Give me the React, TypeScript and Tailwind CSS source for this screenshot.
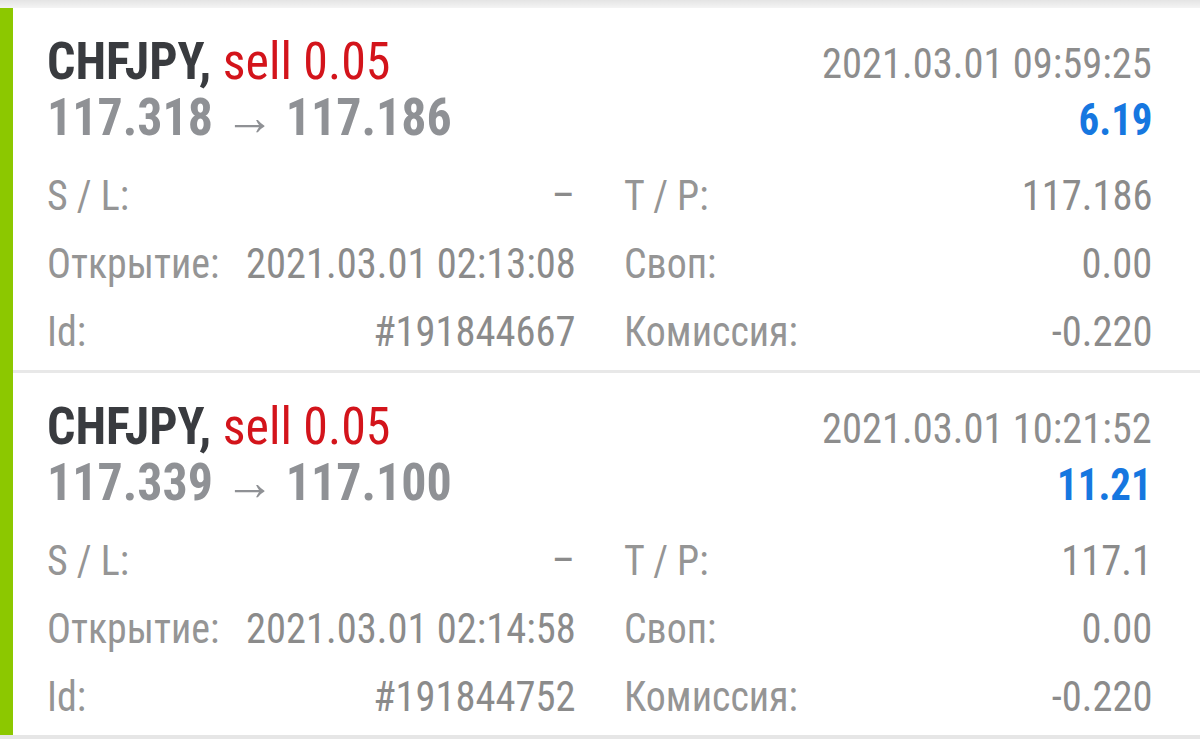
import React from "react";

type Trade = {
  symbol: string;
  side: string;
  open: string;
  close: string;
  date: string;
  profit: string;
  sl: string;
  tp: string;
  openTime: string;
  swap: string;
  id: string;
  commission: string;
};

const trades: Trade[] = [
  {
    symbol: "CHFJPY,",
    side: "sell 0.05",
    open: "117.318",
    close: "117.186",
    date: "2021.03.01 09:59:25",
    profit: "6.19",
    sl: "–",
    tp: "117.186",
    openTime: "2021.03.01 02:13:08",
    swap: "0.00",
    id: "#191844667",
    commission: "-0.220",
  },
  {
    symbol: "CHFJPY,",
    side: "sell 0.05",
    open: "117.339",
    close: "117.100",
    date: "2021.03.01 10:21:52",
    profit: "11.21",
    sl: "–",
    tp: "117.1",
    openTime: "2021.03.01 02:14:58",
    swap: "0.00",
    id: "#191844752",
    commission: "-0.220",
  },
];

function Row({ label, value }: { label: string; value: string }) {
  return (
    <div className="flex justify-between items-baseline h-[68px] leading-[68px]">
      <span className="inline-block whitespace-nowrap origin-left scale-x-[0.95] text-[#959595]">{label}</span>
      <span className="inline-block whitespace-nowrap origin-right scale-x-[0.965] text-[#8b8b8b]">{value}</span>
    </div>
  );
}

function Card({ t }: { t: Trade }) {
  return (
    <div className="bg-white pl-[34px] pr-[48px] pt-[26px] pb-[4px]">
      <div className="flex justify-between">
        <div className="flex flex-col font-bold text-[52px] leading-[56px]">
          <div className="whitespace-nowrap origin-left scale-x-[0.96]">
            <span className="text-[#393b3f]">{t.symbol}</span>{" "}
            <span className="text-[#d3141b] font-normal">{t.side}</span>
          </div>
          <div className="whitespace-nowrap origin-left scale-x-[0.96] text-[#8f9195]">
            {t.open} <span className="font-normal">→</span> {t.close}
          </div>
        </div>
        <div className="flex flex-col items-end pt-[2px]">
          <div className="whitespace-nowrap origin-right scale-x-[0.965] text-[42px] leading-[56px] text-[#8d8d8d]">
            {t.date}
          </div>
          <div className="whitespace-nowrap origin-right scale-x-[0.93] text-[44px] leading-[56px] font-bold text-[#1677e0]">
            {t.profit}
          </div>
        </div>
      </div>
      <div className="mt-[14px] grid grid-cols-2 gap-x-[48px] text-[42px]">
        <div className="flex flex-col">
          <Row label="S / L:" value={t.sl} />
          <Row label="Открытие:" value={t.openTime} />
          <Row label="Id:" value={t.id} />
        </div>
        <div className="flex flex-col">
          <Row label="T / P:" value={t.tp} />
          <Row label="Своп:" value={t.swap} />
          <Row label="Комиссия:" value={t.commission} />
        </div>
      </div>
    </div>
  );
}

export default function App() {
  return (
    <div
      className="w-[1200px] h-[739px] overflow-hidden bg-[#e6e6e6] flex flex-col"
      style={{ fontFamily: "'Roboto Condensed', Roboto, 'Liberation Sans', sans-serif" }}
    >
      <div className="h-[8px] shrink-0 bg-gradient-to-b from-[#e4e4e4] to-[#f4f4f4]" />
      <div className="flex">
        <div className="w-[13px] shrink-0 bg-[#8cc800]" />
        <div className="flex-1 flex flex-col">
          <Card t={trades[0]} />
          <div className="h-[3px] bg-[#e8e8e8]" />
          <Card t={trades[1]} />
        </div>
      </div>
    </div>
  );
}
